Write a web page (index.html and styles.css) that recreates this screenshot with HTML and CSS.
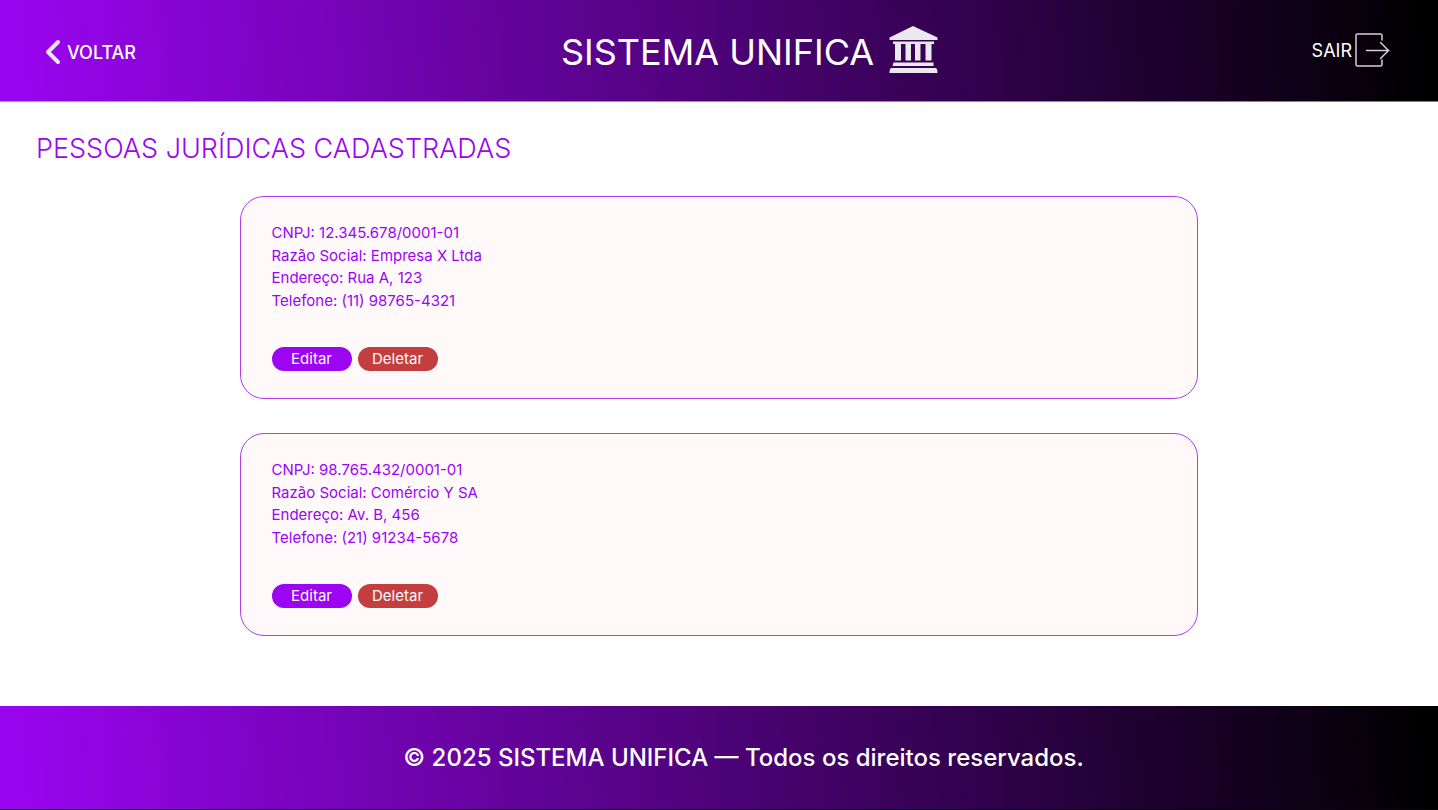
FILE: index.html
```html
<!DOCTYPE html>
<html lang="pt-BR">
<head>
  <meta charset="utf-8">
  <meta name="viewport" content="width=device-width, initial-scale=1">
  <title>Sistema Unifica</title>
  <link rel="stylesheet" href="styles.css">
</head>
<body>
  <header class="topbar">
    <a class="back" href="#">
      <svg class="back-icon" viewBox="0 0 16 26" aria-hidden="true"><path d="M13 3 3 13l10 10"/></svg>
      <span>VOLTAR</span>
    </a>
    <div class="brand">
      <span class="brand-name">SISTEMA UNIFICA</span>
      <svg class="brand-icon" viewBox="0 0 49 48" aria-hidden="true">
        <path d="M24 0 48.500 11.500V14H.5V11.500ZM4 15.500h41v2.500H4ZM6 18h6v16.500H6ZM16.500 18h5.500v16.500h-5.500ZM26 18h5.500v16.500H26ZM36.500 18h6v16.500h-6ZM4.500 36.500h40v3.500h-41ZM2 42h45q1.500 1 1.500 5H.5Q.5 43 2 42Z"/>
      </svg>
    </div>
    <a class="exit" href="#">
      <span>SAIR</span>
      <svg class="exit-icon" viewBox="0 0 36 36" aria-hidden="true"><path d="M28 8V3.500Q28 2 26.500 2H3.500Q2 2 2 3.500v29Q2 34 3.500 34h23q1.500 0 1.500-1.500V28M12.500 18.500H35M26.500 10.500l8 8-8 8"/></svg>
    </a>
  </header>

  <main class="content">
    <h1 class="page-title">PESSOAS JURÍDICAS CADASTRADAS</h1>
    <div class="cards">
      <article class="card">
        <p>CNPJ: 12.345.678/0001-01</p>
        <p>Razão Social: Empresa X Ltda</p>
        <p>Endereço: Rua A, 123</p>
        <p>Telefone: (11) 98765-4321</p>
        <div class="actions">
          <button class="btn btn-edit" type="button">Editar</button>
          <button class="btn btn-delete" type="button">Deletar</button>
        </div>
      </article>
      <article class="card">
        <p>CNPJ: 98.765.432/0001-01</p>
        <p>Razão Social: Comércio Y SA</p>
        <p>Endereço: Av. B, 456</p>
        <p>Telefone: (21) 91234-5678</p>
        <div class="actions">
          <button class="btn btn-edit" type="button">Editar</button>
          <button class="btn btn-delete" type="button">Deletar</button>
        </div>
      </article>
    </div>
  </main>

  <footer class="footer">© 2025 SISTEMA UNIFICA — Todos os direitos reservados.</footer>
</body>
</html>
```
FILE: styles.css
```css
:root {
  --purple: #9b05f2;
  --bar: linear-gradient(86deg, #9b05f2 0%, #000 99%);
}

* {
  box-sizing: border-box;
}

body {
  margin: 0;
  min-height: 100vh;
  display: flex;
  flex-direction: column;
  background: #fff;
  color: var(--purple);
  font-family: Inter, "Liberation Sans", sans-serif;
}

.topbar {
  display: grid;
  grid-template-columns: 1fr auto 1fr;
  align-items: center;
  padding: 26px 48px 27px 45px;
  border-bottom: 1px solid rgba(255, 255, 255, 0.5);
  background: var(--bar);
  color: #fff;
}

.back,
.exit {
  display: flex;
  align-items: center;
  color: #fff;
  font-size: 18px;
  text-decoration: none;
}

.back {
  justify-self: start;
  gap: 6px;
  padding-top: 4px;
  font-weight: 500;
}

.back-icon {
  width: 16px;
  height: 26px;
  fill: none;
  stroke: #ebe6ee;
  stroke-width: 4;
  stroke-linecap: round;
  stroke-linejoin: round;
}

.exit {
  justify-self: end;
  gap: 2px;
}

.exit-icon {
  width: 36px;
  height: 36px;
  fill: none;
  stroke: #d4ced8;
  stroke-width: 1.5;
  stroke-linecap: round;
  stroke-linejoin: round;
}

.brand {
  display: flex;
  align-items: center;
  gap: 15px;
  padding-left: 64px;
}

.brand-name {
  padding-top: 4px;
  font-size: 36px;
  font-weight: 400;
}

.brand-icon {
  width: 49px;
  height: 48px;
  fill: #ebe8ee;
}

.content {
  flex: 1;
  padding: 30px 36px;
}

.page-title {
  margin: 0 0 30px;
  font-size: 27px;
  font-weight: 300;
  line-height: 34px;
}

.cards {
  display: flex;
  flex-direction: column;
  gap: 34px;
  width: 70.2%;
  margin: 0 auto;
}

.card {
  padding: 25px 31px 27px;
  border: 1px solid #b03cf0;
  border-radius: 24px;
  background: #fff9f9;
  font-size: 15px;
  line-height: 1.5;
}

.card p {
  margin: 0;
}

.actions {
  display: flex;
  gap: 6px;
  margin-top: 35px;
}

.btn {
  width: 80px;
  height: 24px;
  padding: 0;
  border: 0;
  border-radius: 12px;
  color: #fff9f9;
  font: inherit;
  line-height: 24px;
}

.btn-edit {
  background: var(--purple);
}

.btn-delete {
  background: #c33f3f;
}

.footer {
  padding: 36px 0 35px 49px;
  border-bottom: 1px solid #0a0410;
  background: var(--bar);
  color: #fff;
  font-size: 24px;
  font-weight: 500;
  line-height: 32px;
  text-align: center;
}
```
